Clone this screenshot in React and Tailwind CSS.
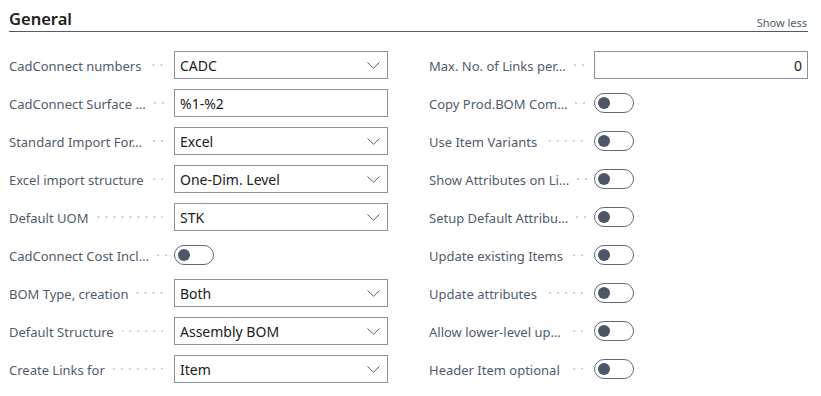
import React from "react";

const left = [
  { label: "CadConnect numbers", type: "select", value: "CADC" },
  { label: "CadConnect Surface …", type: "input", value: "%1-%2" },
  { label: "Standard Import For…", type: "select", value: "Excel" },
  { label: "Excel import structure", type: "select", value: "One-Dim. Level" },
  { label: "Default UOM", type: "select", value: "STK" },
  { label: "CadConnect Cost Incl…", type: "toggle" },
  { label: "BOM Type, creation", type: "select", value: "Both" },
  { label: "Default Structure", type: "select", value: "Assembly BOM" },
  { label: "Create Links for", type: "select", value: "Item" },
];

const right = [
  { label: "Max. No. of Links per…", type: "number", value: "0" },
  { label: "Copy Prod.BOM Com…", type: "toggle" },
  { label: "Use Item Variants", type: "toggle" },
  { label: "Show Attributes on Li…", type: "toggle" },
  { label: "Setup Default Attribu…", type: "toggle" },
  { label: "Update existing Items", type: "toggle" },
  { label: "Update attributes", type: "toggle" },
  { label: "Allow lower-level up…", type: "toggle" },
  { label: "Header Item optional", type: "toggle" },
];

function Leader() {
  return (
    <span className="ml-2 h-[2px] min-w-[10px] flex-1 bg-[linear-gradient(to_right,transparent_6px,#d2d2d2_6px)] bg-[length:8px_2px] bg-right bg-repeat-x" />
  );
}

function Chevron() {
  return (
    <svg width="13" height="7" viewBox="0 0 13 7" className="shrink-0">
      <path d="M0.5 0.5 L6.5 6.2 L12.5 0.5" fill="none" stroke="#505c6d" strokeWidth="1" />
    </svg>
  );
}

function Control({ f }) {
  if (f.type === "toggle") {
    return (
      <div className="flex h-[20px] w-[40px] items-center rounded-full border border-[#5f6a78] bg-white pl-[3px]">
        <span className="h-[12px] w-[12px] rounded-full bg-[#4d5666]" />
      </div>
    );
  }
  if (f.type === "number") {
    return (
      <div className="flex h-[28px] items-center justify-end border border-[#8a8f98] bg-white pr-[5px] text-[14px] text-[#212121]">
        {f.value}
      </div>
    );
  }
  return (
    <div className="flex h-[28px] items-center justify-between border border-[#8a8f98] bg-white pl-[5px] pr-[7px] text-[14px] text-[#212121]">
      <span>{f.value}</span>
      {f.type === "select" && <Chevron />}
    </div>
  );
}

function Row({ f }) {
  return (
    <div className="grid h-[38px] grid-cols-[154px_1fr] items-center gap-x-[11px]">
      <div className="flex min-w-0 items-center">
        <span className="mt-[4px] whitespace-nowrap text-[13px] text-[#505c6d]">{f.label}</span>
        <Leader />
      </div>
      <div>
        {f.type === "toggle" ? (
          <div className="flex">
            <Control f={f} />
          </div>
        ) : (
          <Control f={f} />
        )}
      </div>
    </div>
  );
}

export default function App() {
  return (
    <div className="h-[396px] w-[821px] bg-white pl-[9px] pr-[13px] font-['Segoe_UI','Noto_Sans',sans-serif]">
      <div className="flex h-[32px] items-end justify-between border-b border-[#505c6d]">
        <span className="text-[16.5px] font-semibold leading-[24px] text-[#212121]">General</span>
        <span className="pb-[1px] pr-[1px] text-[11px] leading-[14px] text-[#505c6d]">Show less</span>
      </div>
      <div className="mt-[14px] grid grid-cols-2 gap-x-[41px]">
        <div className="flex flex-col">
          {left.map((f, i) => (
            <Row key={i} f={f} />
          ))}
        </div>
        <div className="flex flex-col">
          {right.map((f, i) => (
            <Row key={i} f={f} />
          ))}
        </div>
      </div>
    </div>
  );
}
